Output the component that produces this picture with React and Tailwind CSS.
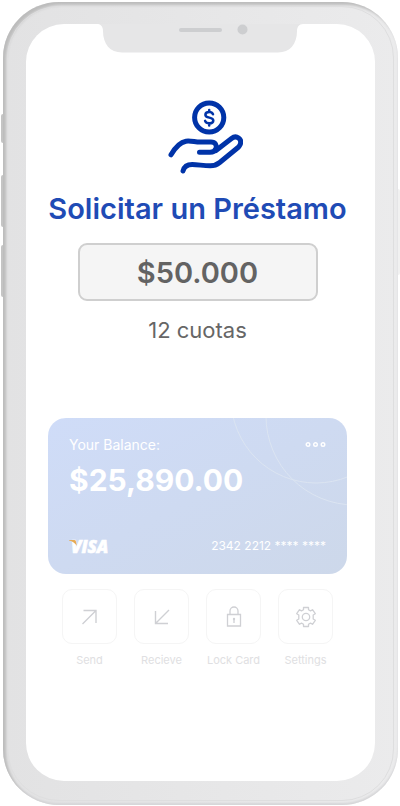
import React from 'react';

const SendIcon = () => (
  <svg viewBox="0 0 24 24" className="w-6 h-6" fill="none" stroke="currentColor" strokeWidth="1.4">
    <path d="M4.500 19 18 5.500M5.500 5.500H18V18" />
  </svg>
);

const ReceiveIcon = () => (
  <svg viewBox="0 0 24 24" className="w-6 h-6" fill="none" stroke="currentColor" strokeWidth="1.4">
    <path d="M19 5 5.500 18.500M5.500 6v12.500H18" />
  </svg>
);

const LockIcon = () => (
  <svg viewBox="0 0 24 24" className="w-6 h-6" fill="none" stroke="currentColor" strokeWidth="1.3">
    <path d="M5.500 9.500h13v11.500h-13zM8 9.500V6a4 4 0 0 1 8 0v3.500M12 14v4" />
    <circle cx="12" cy="14" r="1.200" fill="currentColor" stroke="none" />
  </svg>
);

const GearIcon = () => (
  <svg viewBox="0 0 24 24" className="w-6 h-6" fill="none" stroke="currentColor" strokeWidth="1.3" strokeLinejoin="round">
    <path d="M9.500 2.500h5v2.300l2 1.100 2-1.200 2.800 4-2.100 1.300v4l2.100 1.300-2.800 4-2-1.200-2 1.100v2.300h-5v-2.300l-2-1.100-2 1.200-2.800-4L4.800 14v-4L2.700 8.700l2.800-4 2 1.200 2-1.100z" />
    <circle cx="12" cy="12" r="3.700" />
  </svg>
);

const LoanIcon = () => (
  <svg viewBox="153 100 90 76" className="w-[90px] h-[76px]" fill="none" stroke="#0033a8" strokeWidth="5" strokeLinecap="round" strokeLinejoin="round">
    <circle cx="209.200" cy="117.500" r="14.600" />
    <path d="M213 114.300c-.6-1.500-2-2.200-3.800-2.200-2.200 0-3.800 1-3.800 2.800 0 3.800 7.900 1.700 7.900 5.500 0 1.900-1.700 2.900-4 2.900-2 0-3.600-.8-4.200-2.400M209.200 110v2M209.200 123.500v2" strokeWidth="2.500" />
    <path d="M171 154.800c4-7 8.500-12.500 15-13.600 5-.6 9 .9 14 .9h11c4.500 0 6 3.500 5 6.200-1 2.700-3 3.900-6 3.900h-10.500" />
    <path d="M216 150.500l15.500-12c5-4 11 .5 8.600 6.200-.5 1.300-1.400 2.200-2.400 3.100l-18 14.700c-3 2.400-5.500 3.300-9.500 3.300-7 0-12-1.300-18-1.300-5 0-8.200 2.500-9.200 6.500" />
  </svg>
);

const VisaLogo = () => (
  <svg viewBox="0 0 44 22" className="w-11 h-[22px]" role="img" aria-label="Visa">
    <text x="2" y="18" fontFamily="Open Sans, sans-serif" fontSize="17" fontWeight="800" fontStyle="italic" fill="#fff" stroke="#fff" strokeWidth=".6">VISA</text>
    <path d="M-.5 5h5.800c.8 0 1.300.4 1.500 1.100l1 4.700C6 8 3.500 6.200-.5 5.300z" fill="#e6ab55" />
  </svg>
);

const actions = [
  { label: 'Send', Icon: SendIcon },
  { label: 'Recieve', Icon: ReceiveIcon },
  { label: 'Lock Card', Icon: LockIcon },
  { label: 'Settings', Icon: GearIcon },
];

const Notch = () => (
  <svg viewBox="1 0 206 29" className="w-[206px] h-[29px] mx-auto" aria-hidden="true">
    <path d="M0 0c4 0 6 3 6 7 0 13 7 21.500 19 21.500h156c12 0 19-8.500 19-21.500 0-4 2-7 6-7z" fill="#e6e6e7" />
    <rect x="82" y="4" width="43" height="4" rx="2" fill="#cdced0" />
    <circle cx="145.500" cy="5.500" r="5" fill="#cdced0" />
  </svg>
);

const BalanceCard = () => (
  <section className="relative overflow-hidden mt-[72px] h-[156px] rounded-[18px] bg-linear-to-br from-[#cfdcf8] to-[#cdd8ea] px-[21px] pt-4 pb-[17px] flex flex-col text-white">
    <svg viewBox="0 0 120 100" className="absolute top-0 right-0 w-[120px] h-[100px]" fill="none" stroke="#dbe4f1" aria-hidden="true">
      <circle cx="89" cy="-20" r="85" />
      <circle cx="128" cy="-2" r="89" />
    </svg>
    <div className="relative flex items-center justify-between">
      <span className="text-[14px] leading-[22px]">Your Balance:</span>
      <button type="button" aria-label="More" className="flex">
        <svg viewBox="0 0 21 6" className="w-[21px] h-1.5" fill="none" stroke="currentColor" strokeWidth="1.4">
          <circle cx="3" cy="2.500" r="1.800" />
          <circle cx="10.500" cy="2.500" r="1.800" />
          <circle cx="18" cy="2.500" r="1.800" />
        </svg>
      </button>
    </div>
    <p className="relative mt-1 text-[30px] leading-10 font-bold">$25,890.00</p>
    <div className="mt-auto flex items-center justify-between">
      <VisaLogo />
      <span className="text-[12px] leading-4">2342 2212 **** ****</span>
    </div>
  </section>
);

const App = () => {
  return (
    <div className="min-h-screen bg-white flex pt-0.5 pb-px pl-[3px] pr-0.5 font-['Inter',sans-serif]">
      <div className="relative flex-1 flex flex-col rounded-[56px] bg-linear-to-r from-[#e2e2e3] to-[#ebebec] pt-[22px] px-[23px] pb-6 shadow-[inset_3px_3px_3px_#bcbcbc,inset_0_-2px_2px_#d6d6d8]">
        {/* Side buttons */}
        <div className="absolute -left-0.5 top-28 w-0.5 h-[29px] rounded-l bg-[#c4c4c4]" />
        <div className="absolute -left-0.5 top-[173px] w-0.5 h-[52px] rounded-l bg-[#c4c4c4]" />
        <div className="absolute -left-0.5 top-[243px] w-0.5 h-[52px] rounded-l bg-[#c4c4c4]" />
        <div className="absolute -right-0.5 top-[187px] w-0.5 h-[86px] rounded-r bg-[#f1f1f1]" />
        <div className="pointer-events-none absolute inset-1 rounded-[52px] border border-[#dededf]" />

        {/* Screen */}
        <main className="flex-1 rounded-[38px] bg-white">
          <Notch />
          <div className="pl-[22px] pr-7">
            <div className="flex justify-center mt-[47px]">
              <LoanIcon />
            </div>
            <h1 className="mt-[13px] text-center text-[29px] leading-10 font-semibold text-[#1f4bb5] whitespace-nowrap">Solicitar un Préstamo</h1>
            <input
              type="text"
              aria-label="Monto"
              defaultValue="$50.000"
              className="block mx-auto mt-[14px] w-[240px] h-[58px] rounded-[9px] border-2 border-[#cfcfcf] bg-[#f5f5f5] text-center text-[29px] font-semibold text-[#636363]"
            />
            <p className="mt-[13px] text-center text-[22px] leading-8 text-[#666]">12 cuotas</p>

            <BalanceCard />

            <div className="mt-[15px] px-[14px] flex justify-between">
              {actions.map(({ label, Icon }) => (
                <button key={label} type="button" className="w-[55px] flex flex-col items-center">
                  <span className="w-[55px] h-[55px] rounded-[10px] border border-[#f5f5f5] flex items-center justify-center text-[#cfd0d4]">
                    <Icon />
                  </span>
                  <span className="mt-2 text-[11px] leading-4 text-[#e0e0e2] whitespace-nowrap">{label}</span>
                </button>
              ))}
            </div>
          </div>
        </main>
      </div>
    </div>
  );
};

export default App;
